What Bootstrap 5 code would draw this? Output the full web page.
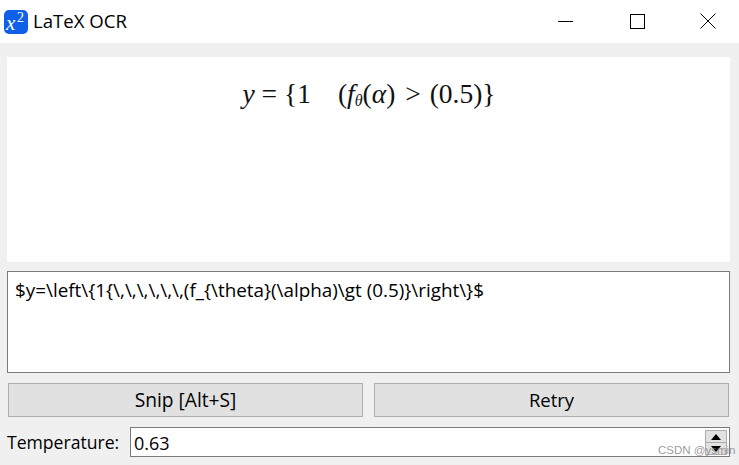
<!DOCTYPE html>
<html lang="en">
<head>
<meta charset="utf-8">
<title>LaTeX OCR</title>
<link href="https://cdn.jsdelivr.net/npm/bootstrap@5.3.0/dist/css/bootstrap.min.css" rel="stylesheet">
<style>
html,body{height:100%;}
body{background:#f0f0f0;font-family:"Open Sans","Noto Sans",sans-serif;color:#000;overflow:hidden;font-size:18px;}
.app-window{width:739px;height:465px;position:relative;}
.title-bar{height:43px;background:#fff;}
.app-logo{width:24px;height:24px;margin:0 5px 0 4px;flex:none;}
.title-text{font-size:18.6px;line-height:22px;margin-top:-2px;}
.win-btn{width:71px;height:41px;}
.win-btns{margin-right:-1px;margin-top:-2px;}
.win-min{margin-right:-1px;padding-left:5px;}
.win-max{padding-left:7px;}
.win-close{padding-left:7px;}
.preview-pane{margin:14px 9px 0 7px;height:205px;background:#fff;padding-top:21px;}
.formula{font-family:"Liberation Serif",serif;font-size:27.5px;line-height:32px;color:#111;margin-left:1px;white-space:nowrap;}
.formula i{font-style:italic;}
.formula sub{font-size:16px;font-style:italic;bottom:-.2em;}
.gap-quad{display:inline-block;width:27px;}
.rel-op{display:inline-block;margin:0 2px 0 3px;}
.source-box{margin:9px 9px 0 7px;height:102px;background:#fff;border:1px solid #7a7a7a;padding:5px 7px;font-size:18.85px;line-height:26px;white-space:pre;width:723px;overflow:hidden;}
.action-row{margin:10px 10px 0 8px;gap:11px;}
.qt-btn{flex:1 1 0;height:34px;background:#e1e1e1;border:1px solid #adadad;border-radius:0;padding:0;color:#000;line-height:32px;}
.qt-snip{font-size:19.2px;}
.qt-retry{font-size:18.5px;}
.temp-row{margin:10px 9px 0 7px;height:30px;}
.temp-label{width:123px;font-size:17.6px;line-height:30px;flex:none;}
.temp-field{flex:1 1 0;height:30px;background:#fff;border:1px solid #7a7a7a;position:relative;padding:2px 3px;font-size:18px;line-height:26px;}
.spin-box{position:absolute;right:2px;top:2px;width:22px;height:25px;display:flex;flex-direction:column;}
.spin-part{flex:1 1 0;background:#e1e1e1;border:1px solid #adadad;display:flex;align-items:center;justify-content:center;}
.spin-part+.spin-part{border-top:0;}
.watermark{position:absolute;left:658px;top:443px;font-family:"Liberation Sans",sans-serif;font-size:11.5px;line-height:14px;color:rgba(120,120,120,.75);white-space:nowrap;}
</style>
</head>
<body>
<div class="app-window">
  <div class="title-bar d-flex align-items-center">
    <svg class="app-logo" viewBox="0 0 24 24"><rect width="24" height="24" rx="5" fill="#0f5fe8"/><text x="2" y="20" font-family="Liberation Serif" font-style="italic" font-size="21" fill="#fff">x</text><text x="13" y="12" font-family="Liberation Serif" font-size="14" fill="#fff">2</text></svg>
    <span class="title-text">LaTeX OCR</span>
    <div class="win-btns ms-auto d-flex">
      <div class="win-btn win-min d-flex align-items-center justify-content-center"><svg width="16" height="16" viewBox="0 0 16 16"><path d="M0 8.5H15" stroke="#000" fill="none"/></svg></div>
      <div class="win-btn win-max d-flex align-items-center justify-content-center"><svg width="16" height="16" viewBox="0 0 16 16"><rect x="1.5" y="1.5" width="14" height="14" stroke="#000" fill="none"/></svg></div>
      <div class="win-btn win-close d-flex align-items-center justify-content-center"><svg width="16" height="16" viewBox="0 0 16 16"><path d="M.5.5L15.5 15.5M15.5.5L.5 15.5" stroke="#000" fill="none"/></svg></div>
    </div>
  </div>
  <div class="preview-pane d-flex justify-content-center align-items-start">
    <div class="formula"><i>y</i> = {1<span class="gap-quad"></span>(<i>f</i><sub>θ</sub>(<i>α</i>) <span class="rel-op">&gt;</span> (0.5)}</div>
  </div>
  <div class="source-box">$y=\left\{1{\,\,\,\,\,\,(f_{\theta}(\alpha)\gt (0.5)}\right\}$</div>
  <div class="action-row d-flex">
    <button type="button" class="btn qt-btn qt-snip">Snip [Alt+S]</button>
    <button type="button" class="btn qt-btn qt-retry">Retry</button>
  </div>
  <div class="temp-row d-flex">
    <div class="temp-label">Temperature:</div>
    <div class="temp-field">0.63
      <div class="spin-box">
        <div class="spin-part"><svg width="10" height="6" viewBox="0 0 10 6"><path d="M5 0L10 6H0Z" fill="#000"/></svg></div>
        <div class="spin-part"><svg width="10" height="6" viewBox="0 0 10 6"><path d="M0 0H10L5 6Z" fill="#000"/></svg></div>
      </div>
    </div>
  </div>
  <div class="watermark">CSDN @ysmin</div>
</div>
<script src="https://cdn.jsdelivr.net/npm/bootstrap@5.3.0/dist/js/bootstrap.bundle.min.js"></script>
</body>
</html>
